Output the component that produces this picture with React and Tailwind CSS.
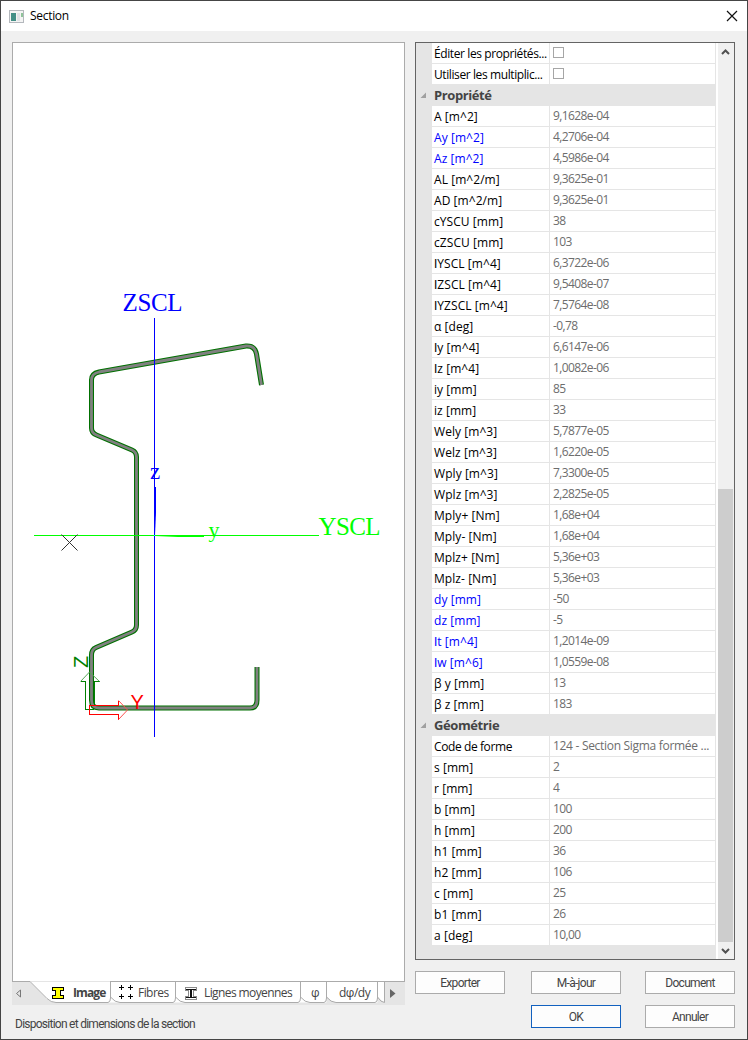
import React from 'react';

const properties = [
  ['A [m^2]', '9,1628e-04'],
  ['Ay [m^2]', '4,2706e-04', true],
  ['Az [m^2]', '4,5986e-04', true],
  ['AL [m^2/m]', '9,3625e-01'],
  ['AD [m^2/m]', '9,3625e-01'],
  ['cYSCU [mm]', '38'],
  ['cZSCU [mm]', '103'],
  ['IYSCL [m^4]', '6,3722e-06'],
  ['IZSCL [m^4]', '9,5408e-07'],
  ['IYZSCL [m^4]', '7,5764e-08'],
  ['α [deg]', '-0,78'],
  ['Iy [m^4]', '6,6147e-06'],
  ['Iz [m^4]', '1,0082e-06'],
  ['iy [mm]', '85'],
  ['iz [mm]', '33'],
  ['Wely [m^3]', '5,7877e-05'],
  ['Welz [m^3]', '1,6220e-05'],
  ['Wply [m^3]', '7,3300e-05'],
  ['Wplz [m^3]', '2,2825e-05'],
  ['Mply+ [Nm]', '1,68e+04'],
  ['Mply- [Nm]', '1,68e+04'],
  ['Mplz+ [Nm]', '5,36e+03'],
  ['Mplz- [Nm]', '5,36e+03'],
  ['dy [mm]', '-50', true],
  ['dz [mm]', '-5', true],
  ['It [m^4]', '1,2014e-09', true],
  ['Iw [m^6]', '1,0559e-08', true],
  ['β y [mm]', '13'],
  ['β z [mm]', '183'],
];

const geometry = [
  ['Code de forme', '124 - Section Sigma formée ...', 'text'],
  ['s [mm]', '2'],
  ['r [mm]', '4'],
  ['b [mm]', '100'],
  ['h [mm]', '200'],
  ['h1 [mm]', '36'],
  ['h2 [mm]', '106'],
  ['c [mm]', '25'],
  ['b1 [mm]', '26'],
  ['a [deg]', '10,00'],
];

const profile =
  'M261.5 385 L256.5 354 Q255 345.5 246 346 L99 372 Q91.5 373.5 91.5 380 V428 Q91.5 433 96.5 435 L132 450 Q136.5 452 136.5 457 V625 Q136.5 630 132 632 L96 647.5 Q91.5 649.5 91.5 655 V700 Q91.5 708 99 708 H250 Q257 708 257 700 V667';

// A leading capital I is set in Roboto, whose I has no serifs.
function Label({ text }) {
  if (!text.startsWith('I')) return text;
  return (
    <>
      <span className="font-[Roboto,sans-serif]">I</span>
      {text.slice(1)}
    </>
  );
}

function Row({ label, blue, wide, tight, children }) {
  return (
    <div className="flex h-[21px] border-b border-[#e5e5e5] bg-white">
      <div
        className={`w-[118px] shrink-0 border-r border-[#e5e5e5] pl-0.5 pt-px text-[12px] leading-[20px] whitespace-nowrap ${tight ? 'tracking-[-0.4px]' : 'tracking-[0.06px]'} ${blue ? 'text-[#0000ff]' : 'text-black'}`}
      >
        <Label text={label} />
      </div>
      <div
        className={`box-content w-[162px] border-r border-[#e5e5e5] pl-[3px] text-[12px] leading-[19px] whitespace-nowrap text-[#6d6d6d] ${wide ? 'tracking-[-0.3px]' : 'tracking-[-0.6px]'}`}
      >
        {children}
      </div>
    </div>
  );
}

function GroupHeader({ children }) {
  return (
    <div className="-ml-4 flex h-[21px] items-center bg-[#e5e5e5]">
      <svg className="mr-[7px] ml-1 size-[7px]" viewBox="0 0 7 7">
        <path d="M6 0.5V6H0.5Z" fill="#a0a0a0" />
      </svg>
      <span className="text-[13px] font-bold tracking-[-0.4px] text-[#444444]">{children}</span>
    </div>
  );
}

function Checkbox() {
  return <div className="mt-1 size-[11px] border border-[#a6a6a6] bg-white" />;
}

function Button({ primary, children }) {
  return (
    <button
      className={`h-[23px] w-[90px] border bg-[#fdfdfd] pt-px font-[Roboto,sans-serif] text-[12px] leading-[20px] tracking-[-0.7px] text-[#444444] ${primary ? 'border-[#1261bf]' : 'border-[#ababab]'}`}
    >
      {children}
    </button>
  );
}

function Drawing() {
  return (
    <svg className="block h-[938px] w-[391px]" viewBox="13 43 391 938">
      <g fill="none" strokeLinejoin="round">
        <path d={profile} stroke="#007000" strokeWidth="5" />
        <path d={profile} stroke="#808080" strokeWidth="2.8" />
      </g>
      <g shapeRendering="crispEdges">
        <rect x="154" y="318" width="1" height="419" fill="#0000ff" />
        <rect x="34" y="535" width="285" height="1" fill="#00ff00" />
        <rect x="154" y="535" width="1" height="1" fill="#00ffff" />
      </g>
      <path d="M155 487h1v26l-1 22z" fill="#0000ff" />
      <path d="M155 535h49v2h-26l-23-1z" fill="#00ff00" />
      <g fontFamily="'Liberation Serif', serif">
        <text x="122.500" y="311" fontSize="25" textLength="60" fill="#0000ff">ZSCL</text>
        <text x="318.500" y="535" fontSize="25" textLength="62" fill="#00ff00">YSCL</text>
        <text x="150" y="479" fontSize="23" fill="#0000ff">z</text>
        <text x="208.500" y="537" fontSize="22" fill="#00ff00">y</text>
      </g>
      <path d="M61.500 534.500l16 16m0-16l-16 16" stroke="#333333" strokeWidth="1" />
      <g fill="none" strokeWidth="1">
        <path d="M85.500 709.500V681.500H80.500M99.500 681.500H94.500V705M85.500 709.500H94" stroke="#008000" shapeRendering="crispEdges" />
        <path d="M80.500 681.500L89.500 672L99.500 681.500" stroke="#58a858" />
        <path d="M118.500 705.500H89.500V714.500H118.500V719.500M118.500 705.500V700.500" stroke="#ff0000" shapeRendering="crispEdges" />
        <path d="M118.500 700.500L127.500 710L118.500 719.500" stroke="#ff5050" />
      </g>
      <g fontFamily="'Liberation Sans', sans-serif">
        <text x="130.500" y="709" fontSize="20" fill="#ff0000">Y</text>
        <text transform="translate(88 668) rotate(-90)" x="0" y="0" fontSize="20" fill="#008000">Z</text>
      </g>
    </svg>
  );
}

function BeamIcon({ outlined }) {
  return outlined ? (
    <svg className="h-[13px] w-3 shrink-0" viewBox="0 0 12 13" shapeRendering="crispEdges">
      <path d="M0.500 0.500H11.500V3.500H8.500V9.500H11.500V12.500H0.500V9.500H3.500V3.500H0.500Z" fill="#fff" stroke="#8a8a8a" />
      <path d="M1 2.500H11M1 10.500H11" stroke="#111" />
      <path d="M6 2V11" stroke="#111" strokeWidth="2" />
    </svg>
  ) : (
    <svg className="size-3 shrink-0" viewBox="0 0 12 12" shapeRendering="crispEdges">
      <path d="M0.500 0.500H11.500V3.500H8.500V8.500H11.500V11.500H0.500V8.500H3.500V3.500H0.500Z" fill="#ffff00" stroke="#000" />
    </svg>
  );
}

function TabStrip() {
  return (
    <div className="relative h-6 w-[393px] bg-[#e5e5e5]">
      <svg className="absolute inset-0 h-6 w-[393px]" viewBox="12 981 393 24">
        <path d="M30 982H377.500V1002.500H337Q331 1002 326.500 996V1002.500H55Q50 1002 46 998Z" fill="#fff" />
        <path d="M378 982H384V1002Q380 1000 378 997Z" fill="#fff" />
        <path d="M12 981.500H30L47 998.500Q51 1002.500 56 1002.500H108Q110.500 1002 110.500 998V982" fill="none" stroke="#ababab" />
        <path
          d="M110.500 997Q115 1002.500 120 1002.500H173Q175.500 1002 175.500 998V982M175.500 997Q180 1002.500 185 1002.500H298Q300.500 1002 300.500 998V982M300.500 997Q305 1002.500 310 1002.500H324Q326.500 1002 326.500 998V982M326.500 997Q331 1002.500 336 1002.500H375Q377.500 1002 377.500 998V982M377.500 997Q381 1002.500 384.500 1002.500V982M110 981.500H405"
          fill="none"
          stroke="#ababab"
        />
        <path d="M20.500 990V997L16.500 993.500Z" fill="none" stroke="#777" />
        <path d="M390 989L395.500 993.500L390 998Z" fill="#666" />
      </svg>
      <div className="relative flex h-6 items-center text-[12px] whitespace-nowrap text-[#444444]">
        <div className="flex w-[98px] shrink-0 items-center pl-10">
          <BeamIcon />
          <span className="ml-[9px] font-bold tracking-[-0.9px]">Image</span>
        </div>
        <div className="flex w-[65px] shrink-0 items-center pl-[9px]">
          <svg className="-mt-0.5 size-[14px] shrink-0" viewBox="0 0 14 14" shapeRendering="crispEdges">
            <path d="M0 2.500h5M2.500 0v5M9 2.500h5M11.500 0v5M0 11.500h5M2.500 9v5M9 11.500h5M11.500 9v5" stroke="#000" />
          </svg>
          <span className="ml-[5px] tracking-[-0.55px]">Fibres</span>
        </div>
        <div className="flex w-[125px] shrink-0 items-center pl-[10px]">
          <BeamIcon outlined />
          <span className="ml-[7px] tracking-[-0.6px]">Lignes moyennes</span>
        </div>
        <div className="w-[26px] pl-[11px]">φ</div>
        <div className="pl-[13px] tracking-[-0.5px]">dφ/dy</div>
      </div>
    </div>
  );
}

export default function App() {
  return (
    <div className="flex h-[1040px] w-[748px] flex-col border border-[#454545] bg-[#f0f0f0] font-['Open_Sans','Noto_Sans',sans-serif]">
      <header className="flex h-[30px] items-center bg-white">
        <svg className="ml-2 h-[13px] w-[15px]" viewBox="0 0 15 13">
          <rect x="0.500" y="0.500" width="14" height="12" fill="#f4f4f4" stroke="#b4b8bd" />
          <rect x="2" y="3" width="5" height="8" fill="#438f86" />
          <rect x="8" y="3" width="3" height="8" fill="#e0e3e6" />
          <rect x="12" y="3" width="2" height="4" fill="#8fc39a" />
        </svg>
        <span className="ml-[6px] text-[12px] tracking-[-0.3px] text-black">Section</span>
        <svg className="mr-[9px] ml-auto size-[12px]" viewBox="0 0 12 12">
          <path d="M1 1L11 11M11 1L1 11" stroke="#111" strokeWidth="1.200" />
        </svg>
      </header>

      <div className="flex flex-1 pt-[11px] pl-[11px]">
        <main className="w-[393px]">
          <div className="h-[939px] border border-b-0 border-[#ababab] bg-white">
            <Drawing />
          </div>
          <TabStrip />
          <p className="mt-[11px] ml-[3px] font-[Roboto,sans-serif] text-[12px] leading-[16px] tracking-[-0.74px] text-[#444444]">
            Disposition et dimensions de la section
          </p>
        </main>

        <aside className="ml-[10px] w-[320px]">
          <div className="flex h-[918px] border border-[#646464] bg-[#e5e5e5]">
            <div className="w-[300px] pl-4">
              <Row tight label="Éditer les propriétés..."><Checkbox /></Row>
              <Row tight label="Utiliser les multiplic..."><Checkbox /></Row>
              <GroupHeader>Propriété</GroupHeader>
              {properties.map(([label, value, blue]) => (
                <Row key={label} label={label} blue={blue}>{value}</Row>
              ))}
              <GroupHeader>Géométrie</GroupHeader>
              {geometry.map(([label, value, kind]) => (
                <Row key={label} label={label} wide={kind === 'text'} tight={kind === 'text'}>{value}</Row>
              ))}
            </div>
            <div className="flex w-[18px] flex-col border-l-2 border-white bg-[#f0f0f0]">
              <svg className="h-[17px] w-4" viewBox="0 0 16 17">
                <path d="M4 11L7.500 7.500L11 11" fill="none" stroke="#505050" strokeWidth="2" />
              </svg>
              <div className="mt-[429px] h-[453px] w-[15px] bg-[#cdcdcd]" />
              <svg className="h-[17px] w-4" viewBox="0 0 16 17">
                <path d="M4 7L7.500 10.500L11 7" fill="none" stroke="#505050" strokeWidth="2" />
              </svg>
            </div>
          </div>
          <div className="mt-[11px] flex justify-between">
            <Button>Exporter</Button>
            <div className="flex gap-6">
              <Button>M-à-jour</Button>
              <Button>Document</Button>
            </div>
          </div>
          <div className="mt-[11px] flex justify-end gap-6">
            <Button primary>OK</Button>
            <Button>Annuler</Button>
          </div>
        </aside>
      </div>
    </div>
  );
}
